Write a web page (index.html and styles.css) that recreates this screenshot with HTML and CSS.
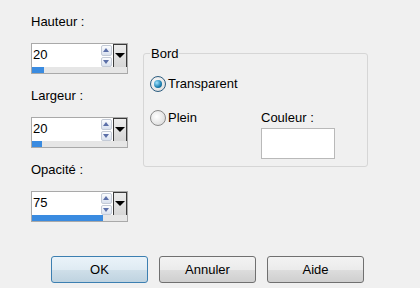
FILE: index.html
```html
<!DOCTYPE html>
<html lang="fr">
<head>
    <meta charset="UTF-8">
    <title>Bordure</title>
    <link rel="stylesheet" href="styles.css">
</head>
<body>
    <div class="dialog">
        <div class="main">
            <div class="fields">
                <div class="field">
                    <div class="label">Hauteur :</div>
                    <div class="spin">
                        <div class="spin-row">
                            <div class="spin-input">20</div>
                            <div class="spin-arrows">
                                <span class="arrow up"></span>
                                <span class="arrow down"></span>
                            </div>
                            <div class="drop"><span></span></div>
                        </div>
                        <div class="track"><div class="fill" style="width: 13%"></div></div>
                    </div>
                </div>
                <div class="field">
                    <div class="label">Largeur :</div>
                    <div class="spin">
                        <div class="spin-row">
                            <div class="spin-input">20</div>
                            <div class="spin-arrows">
                                <span class="arrow up"></span>
                                <span class="arrow down"></span>
                            </div>
                            <div class="drop"><span></span></div>
                        </div>
                        <div class="track"><div class="fill" style="width: 11%"></div></div>
                    </div>
                </div>
                <div class="field">
                    <div class="label">Opacité :</div>
                    <div class="spin">
                        <div class="spin-row">
                            <div class="spin-input">75</div>
                            <div class="spin-arrows">
                                <span class="arrow up"></span>
                                <span class="arrow down"></span>
                            </div>
                            <div class="drop"><span></span></div>
                        </div>
                        <div class="track"><div class="fill" style="width: 75%"></div></div>
                    </div>
                </div>
            </div>

            <fieldset class="group">
                <legend>Bord</legend>
                <div class="group-grid">
                    <label class="radio first"><span class="dot checked"></span>Transparent</label>
                    <label class="radio second"><span class="dot"></span>Plein</label>
                    <div class="color-label">Couleur :</div>
                    <div class="color-box"></div>
                </div>
            </fieldset>
        </div>

        <div class="buttons">
            <button class="btn default">OK</button>
            <button class="btn">Annuler</button>
            <button class="btn">Aide</button>
        </div>
    </div>
</body>
</html>
```

FILE: styles.css
```css
body {
    margin: 0;
    background: #f0f0f0;
    font-family: "Liberation Sans", Arial, sans-serif;
    font-size: 13px;
    color: #000;
}
.dialog {
    width: 420px;
    height: 288px;
    overflow: hidden;
}
.main {
    display: flex;
    gap: 15px;
    padding: 14px 0 0 31px;
}
.fields {
    width: 97px;
}
.field {
    margin-bottom: 14px;
}
.field:last-child {
    margin-bottom: 0;
}
.label {
    line-height: 15px;
    margin-bottom: 14px;
}
.spin {
    border: 1px solid #a9a9a9;
    background: #fff;
}
.spin-row {
    display: flex;
    height: 23px;
}
.spin-input {
    flex: 1;
    padding-left: 1px;
    line-height: 22px;
    font-size: 13px;
}
.spin-arrows {
    width: 11px;
    display: flex;
    flex-direction: column;
    gap: 1px;
    padding-top: 1px;
}
.arrow {
    flex: 1;
    position: relative;
    border: 1px solid #c3cad6;
    border-radius: 2px;
    background: linear-gradient(#fbfcfe, #d9e1ee);
}
.arrow::after {
    content: "";
    position: absolute;
    left: 1px;
    top: 2px;
    border-left: 3.5px solid transparent;
    border-right: 3.5px solid transparent;
}
.arrow.up::after {
    border-bottom: 4px solid #5b6fa8;
}
.arrow.down::after {
    border-top: 4px solid #5b6fa8;
}
.drop {
    width: 12px;
    margin-left: 1px;
    border: 1px solid #3a3a3a;
    border-bottom: none;
    background: linear-gradient(#ececec, #d6d6d6);
    position: relative;
}
.drop span {
    position: absolute;
    left: 1px;
    top: 8px;
    border-left: 5px solid transparent;
    border-right: 5px solid transparent;
    border-top: 5px solid #000;
}
.track {
    height: 6px;
    background: #e6e6e6;
}
.fill {
    height: 100%;
    background: #3a8be0;
}
.group {
    margin: 32px 0 0 0;
    width: 225px;
    height: 121px;
    box-sizing: border-box;
    padding: 0 6px 7px 6px;
    border: 1px solid #d6d6d6;
    border-radius: 3px;
}
.group legend {
    padding: 0 1px;
    line-height: 15px;
}
.group-grid {
    display: grid;
    grid-template-columns: 111px 74px;
}
.radio {
    display: flex;
    align-items: center;
    height: 17px;
    line-height: 17px;
}
.radio.first {
    grid-column: 1 / 3;
    margin-top: 14px;
}
.radio.second {
    margin-top: 17px;
}
.dot {
    width: 16px;
    height: 16px;
    border-radius: 50%;
    border: 1px solid #8a8a8a;
    background: radial-gradient(circle at 40% 40%, #ffffff, #d4d4d4);
    margin-right: 2px;
    box-sizing: border-box;
    position: relative;
}
.dot.checked {
    border-color: #2c5d80;
}
.dot.checked::after {
    content: "";
    position: absolute;
    left: 3px;
    top: 3px;
    width: 8px;
    height: 8px;
    border-radius: 50%;
    background: radial-gradient(circle at 35% 35%, #9fe3ff, #1a7fb0 60%, #0b4a70);
}
.color-label {
    margin-top: 17px;
    height: 17px;
    line-height: 17px;
}
.color-box {
    grid-column: 2;
    margin-top: 2px;
    height: 31px;
    box-sizing: border-box;
    border: 1px solid #b9b9b9;
    background: #fff;
}
.buttons {
    display: flex;
    gap: 11px;
    padding-left: 51px;
    margin-top: 34px;
}
.btn {
    width: 97px;
    height: 27px;
    font-family: "Liberation Sans", Arial, sans-serif;
    font-size: 13px;
    color: #000;
    border: 1px solid #707070;
    border-radius: 3px;
    background: linear-gradient(#f3f3f3 0%, #ebebeb 50%, #dddddd 51%, #cfcfcf 100%);
    padding: 0;
}
.btn.default {
    border-color: #3c7fb1;
    background: linear-gradient(#eaf3f9 0%, #dfebf3 50%, #cfdfe9 51%, #bfd3e0 100%);
}
```
